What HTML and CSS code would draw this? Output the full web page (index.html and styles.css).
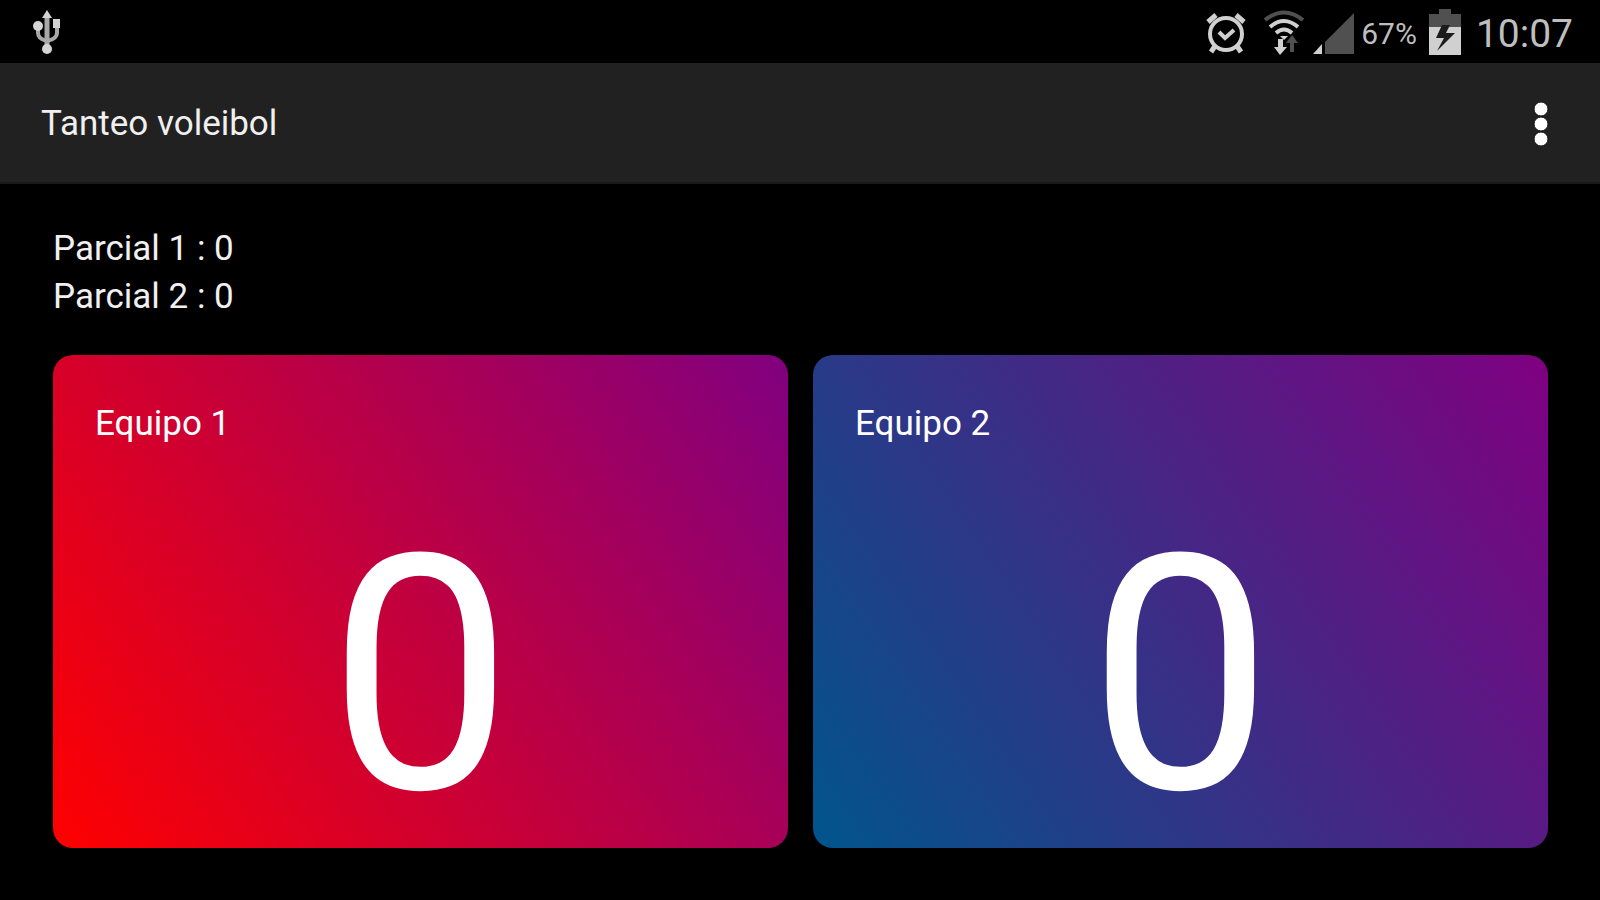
FILE: index.html
```html
<!DOCTYPE html>
<html lang="es">
<head>
<meta charset="utf-8">
<meta name="viewport" content="width=device-width, initial-scale=1">
<title>Tanteo voleibol</title>
<link rel="stylesheet" href="styles.css">
</head>
<body>
<div class="status-bar">
  <svg class="icon-usb" width="28" height="46" viewBox="0 0 28 46" aria-hidden="true">
    <g fill="none" stroke="#a8a8a8" stroke-width="3">
      <path d="M14 6v34" stroke-width="5"/>
      <path d="M5 18v6q0 6 9 8q10-2 10-8v-6" stroke-width="4"/>
    </g>
    <g fill="#d4d4d4">
      <path d="M14 1l5 8H9z"/>
      <circle cx="5" cy="17" r="5"/>
      <path d="M20 10h7v9h-7z"/>
      <circle cx="14" cy="40" r="5"/>
    </g>
  </svg>
  <div class="status-items">
    <svg class="icon-alarm" width="42" height="42" viewBox="0 0 42 42" aria-hidden="true">
      <g fill="none" stroke="#d0d0d0">
        <circle cx="21" cy="22" r="16" stroke-width="4"/>
        <path d="M14 20l6 6 9-8" stroke-width="4"/>
        <path d="M3 10l8-7M39 10l-8-7" stroke-width="5"/>
        <path d="M10 34l-4 6M32 34l4 6" stroke-width="5"/>
      </g>
    </svg>
    <svg class="icon-wifi" width="42" height="46" viewBox="0 0 42 46" aria-hidden="true">
      <g fill="none" stroke="#d0d0d0" stroke-width="4">
        <path d="M2 11q19-15 38 0" stroke="#505050"/>
        <path d="M7 18q14-12 28 0"/>
        <path d="M13 24q8-7 16 0"/>
      </g>
      <path d="M17 27h8l-4 4z" fill="#d0d0d0"/>
      <path d="M15 30h5v8h4l-7 8-6-8h4z" fill="#d0d0d0"/>
      <path d="M27 43v-9h-4l6-8 6 8h-4v9z" fill="#505050"/>
    </svg>
    <svg class="icon-signal" width="42" height="42" viewBox="0 0 42 42" aria-hidden="true">
      <path d="M12 42V30L41 1v41z" fill="#505050"/>
      <path d="M0 42l9-10v10z" fill="#d0d0d0"/>
    </svg>
    <span class="battery-level">67%</span>
    <svg class="icon-battery" width="32" height="46" viewBox="0 0 32 46" aria-hidden="true">
      <path d="M10 0h12v5h10v13H0V5h10z" fill="#505050"/>
      <path d="M0 18h32v28H0z" fill="#d0d0d0"/>
      <path d="M13 16L7 29h8L8 42l18-18h-9l4-8z" fill="#1c1c1c"/>
    </svg>
    <time class="clock">10:07</time>
  </div>
</div>
<header class="app-bar">
  <h1 class="app-title">Tanteo voleibol</h1>
  <button class="menu-button" type="button" aria-label="Más opciones">
    <svg width="16" height="44" viewBox="0 0 16 44" aria-hidden="true">
      <g fill="#fff" stroke="#101010" stroke-width="1">
        <circle cx="8" cy="7" r="7"/>
        <circle cx="8" cy="22" r="7"/>
        <circle cx="8" cy="37" r="7"/>
      </g>
    </svg>
  </button>
</header>
<main class="board">
  <div class="partials">
    <p>Parcial 1 : 0</p>
    <p>Parcial 2 : 0</p>
  </div>
  <div class="teams">
    <button class="team team-one" type="button">
      <span class="team-name">Equipo 1</span>
      <span class="team-score">0</span>
    </button>
    <button class="team team-two" type="button">
      <span class="team-name">Equipo 2</span>
      <span class="team-score">0</span>
    </button>
  </div>
</main>
</body>
</html>
```
FILE: styles.css
```css
* { box-sizing: border-box; }

body {
  margin: 0;
  min-height: 100vh;
  display: flex;
  flex-direction: column;
  background: #000;
  color: #f0f0f0;
  font-family: Roboto, sans-serif;
  font-size: 35px;
  line-height: 48px;
}

.status-bar {
  display: flex;
  align-items: center;
  justify-content: space-between;
  height: 63px;
  padding: 0 27px 0 33px;
  color: #bebebe;
}

.status-items {
  display: flex;
  align-items: center;
}

.icon-alarm { margin-top: 2px; }
.icon-wifi { margin-left: 16px; }

.icon-signal {
  margin-top: 2px;
  margin-left: 8px;
}

.battery-level {
  margin-top: 4px;
  margin-left: 6px;
  font-size: 30px;
}

.icon-battery { margin-left: 12px; }

.clock {
  margin-top: 4px;
  margin-left: 15px;
  font-size: 39px;
}

.app-bar {
  display: flex;
  align-items: center;
  justify-content: space-between;
  height: 121px;
  padding: 2px 43px 0 41px;
  background: #212121;
  border-bottom: 2px solid #191919;
}

.app-title {
  margin: 0;
  font-size: 35px;
  font-weight: 400;
}

.menu-button {
  display: flex;
  padding: 8px;
  border: 0;
  background: none;
  cursor: pointer;
}

.board {
  flex: 1;
  display: flex;
  flex-direction: column;
  padding: 41px 52px 52px 53px;
}

.partials p { margin: 0; }

.teams {
  flex: 1;
  display: grid;
  grid-template-columns: 1fr 1fr;
  gap: 25px;
  margin-top: 34px;
}

.team {
  display: flex;
  flex-direction: column;
  justify-content: space-between;
  padding: 45px 42px 12px;
  border: 0;
  border-radius: 20px;
  color: #fff;
  font: inherit;
  text-align: left;
  cursor: pointer;
}

.team-one { background: linear-gradient(56deg, #f00, #800080); }
.team-two { background: linear-gradient(56deg, #00558c, #800080); }

.team-score {
  align-self: center;
  font-size: 328px;
  line-height: 320px;
}
```
